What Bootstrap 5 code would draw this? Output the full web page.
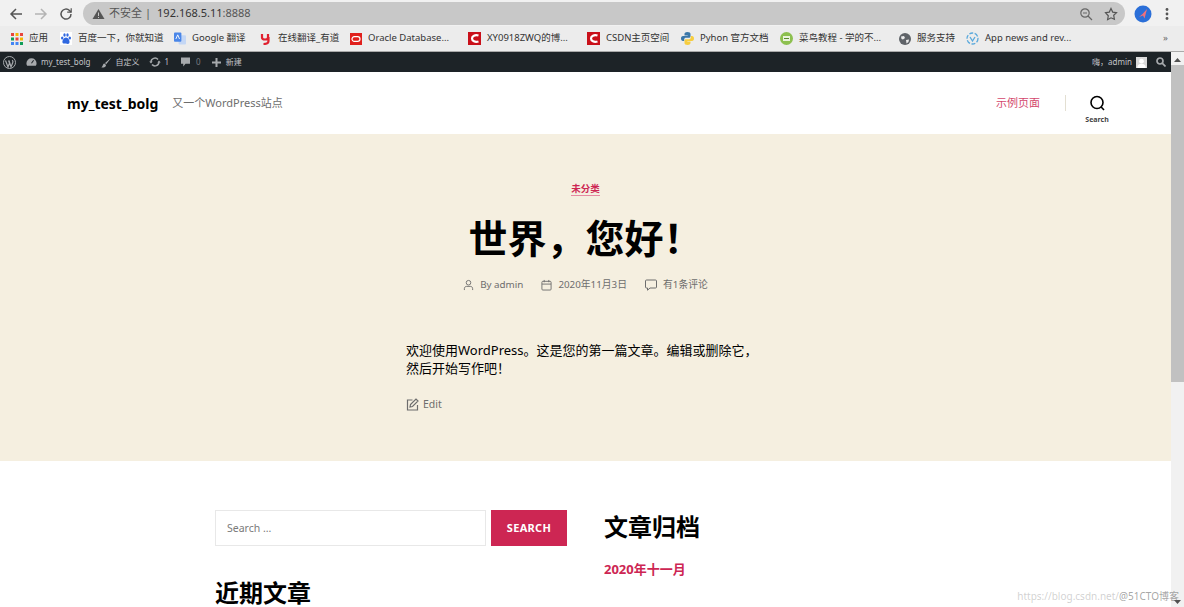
<!DOCTYPE html>
<html lang="zh-CN">

<head>
  <meta charset="UTF-8" />
  <meta name="viewport" content="width=device-width, initial-scale=1.0" />
  <title>my_test_bolg</title>
  <link href="https://cdn.jsdelivr.net/npm/bootstrap@5.3.3/dist/css/bootstrap.min.css" rel="stylesheet" />
  <style>
    html, body {
      height: 607px;
      overflow: hidden;
    }
    body {
      font-family: "Noto Sans", "Noto Sans CJK SC", sans-serif;
      background: #fff;
      color: #000;
    }
    .browser-top { background: #f1f1f1; height: 26px; padding: 1px 0 0 8px; }
    .nav-ico { margin-left: 9px; }
    .url-pill {
      background: #c8c8c8;
      border-radius: 12px;
      height: 23px;
      width: 1042px;
      margin-left: 9px;
      padding: 0 7px 0 9px;
      font-size: 11px;
      color: #555;
    }
    .url-sep { margin: 0 6px 0 3px; }
    .url-host { color: #333; }
    .avatar-ico { margin-left: 9px; }
    .dots-ico { margin-left: 13px; }
    .star-ico { margin-left: 11px; }
    .bookmarks {
      background: #ececec;
      height: 26px;
      border-bottom: 1px solid #a9a9a9;
      font-size: 9.5px;
      color: #333;
      position: relative;
    }
    .bm-item { position: absolute; top: 0; height: 25px; white-space: nowrap; }
    .bm-item svg { margin-right: 6px; flex: none; }
    .admin-bar {
      background: #1d2327;
      height: 20px;
      color: #c3c4c7;
      font-size: 8px;
      padding: 0 5px 0 3px;
    }
    .page-wrap { height: 555px; }
    .page-main { width: 1171px; overflow: hidden; }
    .scroll-rail { width: 13px; background: #f1f1f1; position: relative; }
    .scroll-thumb { background: #c1c1c1; height: 317px; margin-top: 13px; }
    .site-head { height: 62px; padding: 0 58px 0 67px; }
    .site-name { font-size: 14px; font-weight: 700; margin-right: 14px; }
    .site-desc { font-size: 11px; color: #6d6d6d; }
    .head-link { color: #cd2653; font-size: 11px; opacity: .85; }
    .head-sep { width: 1px; height: 16px; background: #e3dfd2; margin: 0 15px 0 25px; }
    .search-toggle { width: 32px; font-size: 7px; font-weight: 700; color: #444; line-height: 1; margin-top: 12px; }
    .hero {
      background: #f5efe0;
      height: 327px;
      padding-top: 40px;
    }
    .cat-link {
      color: #cd2653;
      font-size: 9.5px;
      font-weight: 700;
      line-height: 13px;
      border-bottom: 1px solid #e58aa2;
    }
    .hero-title { font-size: 39px; font-weight: 700; line-height: 56px; margin: 12px 0 10px; }
    .meta-row { font-size: 9.8px; color: #6d6d6d; gap: 18px; height: 18px; }
    .meta-item { gap: 6px; }
    .post-body { width: 358px; margin: 47px 0 0 406px; font-size: 13px; line-height: 18px; }
    .post-body p { margin: 0 0 18px; }
    .edit-row { font-size: 10.5px; color: #6d6d6d; }
    .lower { padding: 49px 0 0 215px; }
    .left-col { width: 352px; margin-right: 37px; }
    .search-input {
      width: 271px;
      height: 36px;
      border: 1px solid #e8e8e8;
      padding: 1px 11px 0;
      font-size: 10.5px;
      color: #7a7a7a;
    }
    .search-btn {
      width: 76px;
      height: 36px;
      margin-left: 5px;
      background: #cd2653;
      color: #fff;
      font-size: 11px;
      font-weight: 700;
      letter-spacing: .3px;
      border: 0;
      border-radius: 0;
      padding: 0;
    }
    .widget-title { font-size: 24px; font-weight: 700; line-height: 34px; margin: 0; }
    .archive-link { color: #cd2653; font-size: 13px; font-weight: 700; margin-top: 16px; }
    .watermark {
      position: absolute;
      right: 5px;
      bottom: 3px;
      font-size: 10px;
      color: rgba(120, 120, 120, .35);
      white-space: nowrap;
    }
    .watermark span { color: rgba(90, 90, 90, .55); }
  </style>
</head>

<body>
  <!-- browser chrome -->
  <div class="browser-top d-flex align-items-center">
    <svg width="16" height="16" viewBox="0 0 16 16" fill="none" stroke="#555" stroke-width="1.5"><path d="M14 8H3M8 3 3 8l5 5"/></svg>
    <svg class="nav-ico" width="16" height="16" viewBox="0 0 16 16" fill="none" stroke="#b4b4b4" stroke-width="1.5"><path d="M2 8h11M8 3l5 5-5 5"/></svg>
    <svg class="nav-ico" width="16" height="16" viewBox="0 0 16 16" fill="none" stroke="#555" stroke-width="1.5"><path d="M13 8a5 5 0 1 1-1.5-3.5L13 6"/><path d="M13.2 2.2v4h-4" stroke-width="1.2"/></svg>
    <div class="url-pill d-flex align-items-center flex-shrink-0">
      <svg width="13" height="12" viewBox="0 0 13 12"><path d="M6.500 1 12.500 11H.5z" fill="#555"/><path d="M6.500 4.500v3.500M6.500 9v1" stroke="#c8c8c8"/></svg>
      <span style="margin-left:4px">不安全</span><span class="url-sep">|</span>
      <span><span class="url-host">192.168.5.11</span>:8888</span>
      <svg class="ms-auto" width="14" height="14" viewBox="0 0 14 14" fill="none" stroke="#666" stroke-width="1.2"><circle cx="6" cy="6" r="4.200"/><path d="M9 9l4 4M4 6h4"/></svg>
      <svg class="star-ico" width="14" height="14" viewBox="0 0 14 14" fill="none" stroke="#555" stroke-width="1.2"><path d="M7 1.500l1.700 3.600 3.800.5-2.800 2.700.7 3.900L7 10.800l-3.400 1.900.7-3.900L1.500 5.600l3.800-.5z"/></svg>
    </div>
    <svg class="avatar-ico" width="18" height="18" viewBox="0 0 18 18"><circle cx="9" cy="9" r="8.500" fill="#2b6fd8"/><path d="M13 4 10.500 13.500 9 10.500l-4 1.500 3.500-3z" fill="#f0707a"/></svg>
    <svg class="dots-ico" width="4" height="14" viewBox="0 0 4 14" fill="#555"><circle cx="2" cy="2.500" r="1.400"/><circle cx="2" cy="7" r="1.400"/><circle cx="2" cy="11.500" r="1.400"/></svg>
  </div>

  <div class="bookmarks">
    <div class="bm-item d-flex align-items-center" style="left:11px">
      <svg width="12" height="12" viewBox="0 0 12 12"><g fill="#e8453c"><rect width="3" height="3"/><rect x="4.500" width="3" height="3" fill="#f4b400"/><rect x="9" width="3" height="3"/></g><g fill="#0f9d58"><rect y="4.500" width="3" height="3"/><rect x="4.500" y="4.500" width="3" height="3" fill="#e8453c"/><rect x="9" y="4.500" width="3" height="3" fill="#f4b400"/></g><g fill="#4285f4"><rect y="9" width="3" height="3"/><rect x="4.500" y="9" width="3" height="3"/><rect x="9" y="9" width="3" height="3" fill="#0f9d58"/></g></svg>
      <span>应用</span>
    </div>
    <div class="bm-item d-flex align-items-center" style="left:60px">
      <svg width="12" height="13" viewBox="0 0 12 13" fill="#3068e0"><rect width="12" height="13" fill="#fff"/><ellipse cx="2.200" cy="6" rx="1.200" ry="1.600"/><ellipse cx="4.500" cy="3" rx="1.200" ry="1.700"/><ellipse cx="7.500" cy="3" rx="1.200" ry="1.700"/><ellipse cx="9.800" cy="6" rx="1.200" ry="1.600"/><path d="M6 5.500c2 0 4 3 3.500 5S7 12 6 11.500 3 12.500 2.500 10.500 4 5.500 6 5.500z"/></svg>
      <span>百度一下，你就知道</span>
    </div>
    <div class="bm-item d-flex align-items-center" style="left:174px">
      <svg width="12" height="14" viewBox="0 0 13 14"><rect x="5" y="3" width="8" height="10" rx="1" fill="#c4d7f5"/><rect width="8" height="10" rx="1" fill="#4a86e8"/><path d="M2 7l2-4.500L6 7" fill="none" stroke="#fff"/></svg>
      <span>Google 翻译</span>
    </div>
    <div class="bm-item d-flex align-items-center" style="left:260px">
      <svg width="11" height="12" viewBox="0 0 10 12" fill="none" stroke="#e0202f" stroke-width="2.200"><path d="M1.500 1v3.500c0 1.500 1 2 3 2s3-.5 3-2V1M8 4v4c0 2-2 3-5 3"/></svg>
      <span style="margin-left:1px">在线翻译_有道</span>
    </div>
    <div class="bm-item d-flex align-items-center" style="left:350px">
      <svg width="12" height="12" viewBox="0 0 12 12"><rect width="12" height="12" fill="#e0201c"/><rect x="2" y="3.700" width="8" height="4.600" rx="2.300" fill="none" stroke="#fff" stroke-width="1.200"/></svg>
      <span>Oracle Database...</span>
    </div>
    <div class="bm-item d-flex align-items-center" style="left:468px">
      <svg width="13" height="13" viewBox="0 0 13 13"><rect width="13" height="13" fill="#c9101a"/><path d="M10.500 3.500C7 2.500 4 4 4 6.500S7 10.500 10.500 9.500" fill="none" stroke="#fff" stroke-width="2.200"/></svg>
      <span>XY0918ZWQ的博...</span>
    </div>
    <div class="bm-item d-flex align-items-center" style="left:587px">
      <svg width="13" height="13" viewBox="0 0 13 13"><rect width="13" height="13" fill="#c9101a"/><path d="M10.500 3.500C7 2.500 4 4 4 6.500S7 10.500 10.500 9.500" fill="none" stroke="#fff" stroke-width="2.200"/></svg>
      <span>CSDN主页空间</span>
    </div>
    <div class="bm-item d-flex align-items-center" style="left:681px">
      <svg width="13" height="13" viewBox="0 0 13 13"><path d="M6.500 0C4 0 3.500 1 3.500 2.200V3.500h3.200V4H2C.7 4 0 5 0 6.500S.7 9 2 9h1.200V7.500C3.200 6.300 4 5.800 5 5.800h3c1 0 1.500-.7 1.500-1.500V2C9.500 .8 8.500 0 6.500 0z" fill="#3b77a8"/><path d="M6.500 13c2.500 0 3-1 3-2.200V9.500H6.300V9H11c1.300 0 2-1 2-2.500S12.300 4 11 4H9.800v1.500C9.800 6.700 9 7.200 8 7.200H5c-1 0-1.500.7-1.500 1.500V11c0 1.200 1 2 3 2z" fill="#f6cd3f"/></svg>
      <span>Pyhon 官方文档</span>
    </div>
    <div class="bm-item d-flex align-items-center" style="left:780px">
      <svg width="13" height="13" viewBox="0 0 13 13"><circle cx="6.500" cy="6.500" r="6.500" fill="#8dc04f"/><rect x="3" y="4" width="7" height="5" fill="#eaf3dc"/><path d="M4 6.500h5" stroke="#5a8a2f"/></svg>
      <span>菜鸟教程 - 学的不...</span>
    </div>
    <div class="bm-item d-flex align-items-center" style="left:899px">
      <svg width="12" height="12" viewBox="0 0 12 12"><circle cx="6" cy="6" r="6" fill="#5f6368"/><path d="M2 3.500 5 3l1 2-2 1.500L2.500 6zM7 7l3-.5-.5 2.500-2 1.500z" fill="#ececec"/></svg>
      <span>服务支持</span>
    </div>
    <div class="bm-item d-flex align-items-center" style="left:966px">
      <svg width="13" height="13" viewBox="0 0 13 13" fill="none" stroke="#5aa9dc" stroke-width="1.300"><circle cx="6.500" cy="6.500" r="5.500" stroke-dasharray="4 1.500"/><path d="M4 5l2.500 4L9 5"/></svg>
      <span>App news and rev...</span>
    </div>
    <div class="bm-item d-flex align-items-center" style="left:1163px;color:#666">»</div>
  </div>

  <div class="page-wrap d-flex position-relative">
    <div class="page-main">
      <!-- wp admin bar -->
      <div class="admin-bar d-flex align-items-center">
        <svg width="13" height="13" viewBox="0 0 13 13"><circle cx="6.500" cy="6.500" r="6" fill="none" stroke="#a7aaad"/><path d="M2.500 4.500 5 11l1.500-4-1-2.500M6 4.500 8 11l1.800-4.500c.4-1-.2-2-.8-2.200" fill="none" stroke="#a7aaad" stroke-width="1.200"/></svg>
        <svg style="margin-left:10px" width="11" height="10" viewBox="0 0 13 11" fill="#a7aaad"><path d="M6.500 1a6 6 0 0 0-6 6c0 1.200.3 2.200.9 3h10.200c.6-.8.9-1.800.9-3a6 6 0 0 0-6-6z"/><path d="M6.500 7 9 3.500" stroke="#1d2327" stroke-width="1.200"/></svg>
        <span class="ms-1">my_test_bolg</span>
        <svg style="margin-left:10px" width="11" height="11" viewBox="0 0 11 11" fill="#a7aaad"><path d="M10.500.5 4 6l1.200 1.200zM3.500 6.500C2 6.500 2 8 1.500 9 1 10 .5 10 .5 10.500c2 .3 4.500-.3 4.500-2.500z"/></svg>
        <span class="ms-1">自定义</span>
        <svg style="margin-left:9px" width="12" height="10" viewBox="0 0 12 10" fill="none" stroke="#a7aaad" stroke-width="1.500"><path d="M2 5a4 4 0 0 1 7-2.500M10 5a4 4 0 0 1-7 2.500"/><path d="M.2 4.500h3.500L2 6.500zM11.800 5.500H8.300L10 3.500z" fill="#a7aaad" stroke="none"/></svg>
        <span class="ms-1">1</span>
        <svg style="margin-left:12px" width="9" height="10" viewBox="0 0 10 10" fill="#a7aaad"><path d="M0 0h10v7H5L2.500 10V7H0z"/></svg>
        <span style="margin-left:6px;color:#787c82">0</span>
        <svg style="margin-left:11px" width="9" height="9" viewBox="0 0 9 9" fill="#a7aaad"><path d="M3.500 0h2v3.500H9v2H5.500V9h-2V5.500H0v-2h3.500z"/></svg>
        <span style="margin-left:5px">新建</span>
        <span class="ms-auto">嗨，admin</span>
        <svg class="ms-1" width="11" height="11" viewBox="0 0 13 13"><rect width="13" height="13" fill="#d9d9d9"/><circle cx="6.500" cy="5" r="2.800" fill="#fff"/><path d="M1.500 13c0-3.500 2-5 5-5s5 1.500 5 5z" fill="#fff"/></svg>
        <svg style="margin-left:9px" width="10" height="10" viewBox="0 0 10 10" fill="none" stroke="#a7aaad" stroke-width="1.700"><circle cx="4" cy="4" r="3"/><path d="M6.200 6.200 9.500 9.500"/></svg>
      </div>

      <header class="site-head d-flex align-items-center">
        <span class="site-name">my_test_bolg</span>
        <span class="site-desc">又一个WordPress站点</span>
        <a class="head-link ms-auto text-decoration-none" href="#">示例页面</a>
        <span class="head-sep"></span>
        <div class="search-toggle d-flex flex-column align-items-center">
          <svg width="17" height="17" viewBox="0 0 17 17" fill="none" stroke="#000" stroke-width="1.600"><circle cx="8" cy="7.500" r="6"/><path d="M12.200 12 15 15"/></svg>
          <span class="mt-1">Search</span>
        </div>
      </header>

      <section class="hero">
        <div class="text-center"><a class="cat-link text-decoration-none" href="#">未分类</a></div>
        <h1 class="hero-title text-center">世界，您好！</h1>
        <div class="meta-row d-flex justify-content-center align-items-center">
          <span class="meta-item d-flex align-items-center">
            <svg width="11" height="12" viewBox="0 0 12 12" fill="none" stroke="#6d6d6d"><circle cx="6" cy="3.500" r="2.500"/><path d="M1.500 11.500v-1.500c0-1.500 1-2.500 2.500-2.500h4c1.500 0 2.500 1 2.500 2.500v1.500"/></svg>
            By admin
          </span>
          <span class="meta-item d-flex align-items-center">
            <svg width="11" height="12" viewBox="0 0 12 12" fill="none" stroke="#6d6d6d"><rect x="1" y="2" width="10" height="9.500" rx="1"/><path d="M1 5h10M3.500 .5v2.500M8.500 .5v2.500"/></svg>
            2020年11月3日
          </span>
          <span class="meta-item d-flex align-items-center">
            <svg width="12" height="12" viewBox="0 0 12 12" fill="none" stroke="#6d6d6d"><path d="M1.500 1h9a1 1 0 0 1 1 1v6a1 1 0 0 1-1 1H5L2.500 11.200V9h-1a1 1 0 0 1-1-1V2a1 1 0 0 1 1-1z"/></svg>
            有1条评论
          </span>
        </div>
        <div class="post-body">
          <p>欢迎使用WordPress。这是您的第一篇文章。编辑或删除它，然后开始写作吧！</p>
          <div class="edit-row d-flex align-items-center gap-1">
            <svg width="13" height="13" viewBox="0 0 13 13" fill="none" stroke="#6d6d6d" stroke-width="1.200"><path d="M6.500 2H1.500v10h10V7"/><path d="M4.500 6.500 10 1l2 2-5.500 5.500-2.500.5z"/></svg>
            <span>Edit</span>
          </div>
        </div>
      </section>

      <section class="lower d-flex">
        <div class="left-col">
          <div class="d-flex">
            <div class="search-input d-flex align-items-center">Search ...</div>
            <button class="btn search-btn" type="button">SEARCH</button>
          </div>
          <h2 class="widget-title" style="margin-top:30px">近期文章</h2>
        </div>
        <div>
          <h2 class="widget-title">文章归档</h2>
          <div class="archive-link">2020年十一月</div>
        </div>
      </section>
    </div>

    <div class="scroll-rail">
      <svg class="position-absolute" style="left:3px;top:6px" width="7" height="4" viewBox="0 0 7 4" fill="#505050"><path d="M0 4h7L3.500 0z"/></svg>
      <div class="scroll-thumb"></div>
      <svg class="position-absolute" style="left:3px;bottom:3px" width="7" height="4" viewBox="0 0 7 4" fill="#505050"><path d="M0 0h7L3.500 4z"/></svg>
    </div>
    <div class="watermark">https://blog.csdn.net/<span>@51CTO博客</span></div>
  </div>

  <script src="https://cdn.jsdelivr.net/npm/bootstrap@5.3.3/dist/js/bootstrap.bundle.min.js"></script>
</body>

</html>
